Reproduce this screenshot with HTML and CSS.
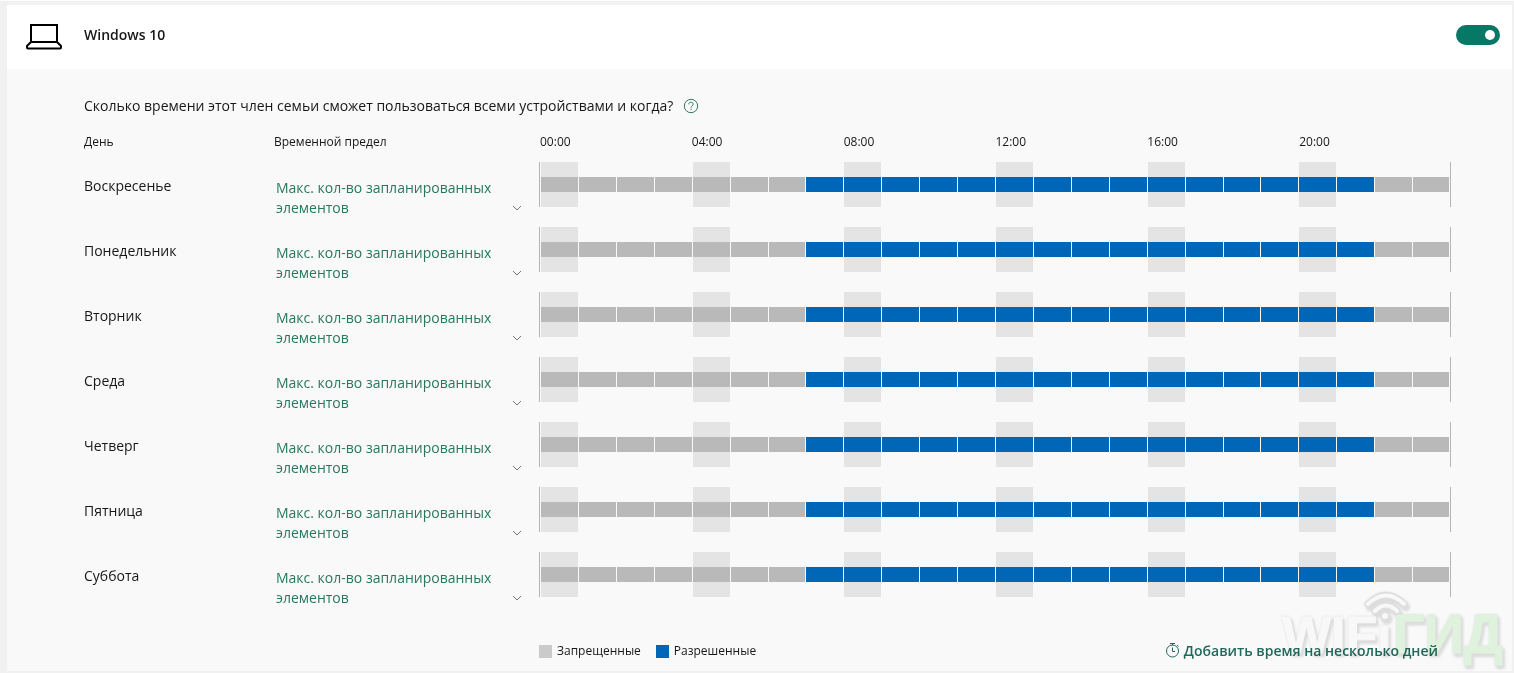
FILE: index.html
```html
<!DOCTYPE html>
<html lang="ru">
<head>
<meta charset="utf-8">
<title>Windows 10</title>
<link rel="stylesheet" href="styles.css">
</head>
<body>
<main class="card">
  <header class="device">
    <svg class="laptop" viewBox="0 0 38 28" aria-hidden="true"><path d="M6 3h26v17H6zM6 20l-4 4v1.500q0 1 1 1h32q1 0 1-1v-1.500L32 20"/></svg>
    <h1 class="device-name" id="device-name">Windows 10</h1>
    <input class="toggle" type="checkbox" role="switch" aria-labelledby="device-name" checked>
  </header>
  <section class="schedule">
    <div class="question">
      <h2 class="question-text">Сколько времени этот член семьи сможет пользоваться всеми устройствами и когда?</h2>
      <button class="help" type="button" aria-label="Справка"><svg class="help-icon" viewBox="0 0 16 16" aria-hidden="true"><circle cx="8" cy="8" r="6.700"/><path d="M5.800 6.300C5.800 3.400 10.200 3.600 10.200 6.200 10.200 7.800 8 7.900 8 9.700M8 10.800v1.200"/></svg></button>
    </div>
    <table class="days">
      <thead>
        <tr>
          <th class="col-day" scope="col">День</th>
          <th class="col-limit" scope="col">Временной предел</th>
          <th scope="col"><div class="hours"><span>00:00</span><span>04:00</span><span>08:00</span><span>12:00</span><span>16:00</span><span>20:00</span></div></th>
        </tr>
      </thead>
      <tbody id="days"></tbody>
    </table>
    <footer class="footer">
      <ul class="legend">
        <li class="legend-item"><span class="swatch"></span>Запрещенные</li>
        <li class="legend-item"><span class="swatch swatch-allowed"></span>Разрешенные</li>
      </ul>
      <button class="add-time" type="button"><svg class="timer" viewBox="0 0 15 16" aria-hidden="true"><circle cx="7.500" cy="8" r="6"/><path d="M5 0.500h5M7.500 0.500v2M12 2l1.500 1.500M7.500 4.500V8.500H10"/></svg>Добавить время на несколько дней</button>
    </footer>
  </section>
</main>
<svg class="watermark" viewBox="0 0 236 86" aria-hidden="true">
  <text x="6" y="66" class="mark-text mark-latin">WIF</text>
  <text x="101" y="66" class="mark-text mark-latin">ı</text>
  <text x="117" y="66" class="mark-text mark-green">ГИД</text>
  <path class="mark-halo" d="M92 17Q110 0 128 17M99 24Q110 13 121 24"/>
  <path class="mark-wave" d="M92 17Q110 0 128 17M99 24Q110 13 121 24"/>
  <circle class="mark-dot" cx="109" cy="29" r="4"/>
</svg>
<script src="schedule.js"></script>
</body>
</html>
```
FILE: styles.css
```css
* { box-sizing: border-box; }
body {
  margin: 0;
  padding: 4px 2px 2px 7px;
  border-top: 1px solid #fcfcfc;
  background: #f1f1f1;
  color: #171717;
  font: 14px/20px "Open Sans", "Noto Sans", sans-serif;
  position: relative;
}
button { font: inherit; color: inherit; background: none; border: 0; padding: 0; cursor: pointer; }
.card { background: #f9f9f9; }
.device {
  display: flex;
  align-items: center;
  height: 64px;
  padding: 0 12px 4px 18px;
  background: #fff;
}
.laptop { width: 38px; height: 28px; margin: 2px 21px 0 0; fill: none; stroke: #000; stroke-width: 2; }
.device-name { flex: 1; margin: 0; font-size: 14px; font-weight: 600; }
.toggle {
  appearance: none;
  display: flex;
  align-items: center;
  justify-content: flex-end;
  width: 44px;
  height: 20px;
  margin: 0;
  padding: 0 5px;
  border-radius: 10px;
  background: #077865;
}
.toggle::before { content: ""; width: 10px; height: 10px; border-radius: 50%; background: #fff; }
.toggle:not(:checked) { justify-content: flex-start; background: #777; }
.schedule { padding: 27px 61px 10px 77px; }
.question { display: flex; align-items: center; gap: 10px; }
.question-text { margin: 0; font-size: 14px; font-weight: 400; }
.help { display: flex; }
.help-icon { width: 16px; height: 16px; fill: none; stroke: #35755f; stroke-width: 1; }
.days { width: 100%; table-layout: fixed; border-collapse: collapse; margin-top: 16px; }
.days th, .days td { padding: 0; text-align: left; vertical-align: top; font-weight: 400; }
.days thead th { height: 30px; font-size: 12px; }
.days tbody tr { height: 65px; }
.col-day { width: 190px; }
.col-limit { width: 265px; }
.hours { display: grid; grid-template-columns: repeat(6, 1fr); padding-left: 1px; }
.days .day { padding-top: 14px; }
.limit {
  display: flex;
  align-items: flex-end;
  justify-content: space-between;
  width: 246px;
  margin: 16px 0 0 2px;
  color: #28775f;
  text-align: left;
}
.limit-text { width: 225px; }
.chevron { width: 10px; height: 20px; fill: none; stroke: #777; stroke-width: 1; }
.timeline {
  display: grid;
  grid-template-columns: repeat(24, 1fr);
  gap: 1px;
  height: 45px;
  padding-left: 1px;
  border: solid #b5b5b5;
  border-width: 0 1px;
}
.hour { padding: 15px 0; background: #b9b9b9 content-box; }
.hour:last-child { margin-right: 1px; }
.hour-marked { background: linear-gradient(#b9b9b9, #b9b9b9) content-box, #e4e4e4; }
.hour-allowed { background: #0067b8 content-box; }
.hour-allowed.hour-marked { background: linear-gradient(#0067b8, #0067b8) content-box, #e4e4e4; }
.footer { display: flex; justify-content: space-between; padding: 24px 13px 0 455px; }
.legend { display: flex; gap: 15px; margin: 0; padding: 0; list-style: none; font-size: 12px; }
.legend-item { display: flex; align-items: center; gap: 5px; }
.swatch { width: 13px; height: 13px; background: #cacaca; }
.swatch-allowed { background: #0067b8; }
.add-time { display: flex; align-items: center; gap: 4px; color: #21695b; font-weight: 600; }
.timer { width: 15px; height: 16px; fill: none; stroke: #21695b; stroke-width: 1; }
.watermark {
  position: absolute;
  right: 2px;
  bottom: 0;
  width: 236px;
  height: 86px;
  pointer-events: none;
  mix-blend-mode: multiply;
  filter: drop-shadow(2px 3px 1px #e2e2e2) drop-shadow(0 0 1px #e6e6e6);
}
.mark-text { font: bold 55px "Liberation Sans", sans-serif; stroke-width: 1; }
.mark-latin { font-size: 52px; fill: #fefefe; stroke: #fefefe; }
.mark-green { fill: #e5f8e4; stroke: #e5f8e4; }
.mark-halo { fill: none; stroke: #e4e4e4; stroke-width: 7; stroke-linecap: round; }
.mark-wave { fill: none; stroke: #fefefe; stroke-width: 4; stroke-linecap: round; }
.mark-dot { fill: #fefefe; stroke: #e4e4e4; stroke-width: 2; }
```
FILE: schedule.js
```js
const days = ["Воскресенье", "Понедельник", "Вторник", "Среда", "Четверг", "Пятница", "Суббота"];
const body = document.getElementById("days");
for (const day of days) {
  let hours = "";
  for (let h = 0; h < 24; h++) {
    const marked = h % 4 === 0 ? " hour-marked" : "";
    const allowed = h >= 7 && h < 22 ? " hour-allowed" : "";
    hours += `<span class="hour${marked}${allowed}"></span>`;
  }
  body.insertAdjacentHTML("beforeend", `<tr>
    <th class="day" scope="row">${day}</th>
    <td><button class="limit" type="button" aria-haspopup="listbox"><span class="limit-text">Макс. кол-во запланированных элементов</span><svg class="chevron" viewBox="0 0 10 20" aria-hidden="true"><path d="M1 8l4 4 4-4"/></svg></button></td>
    <td><div class="timeline" role="img" aria-label="Разрешено с 07:00 до 22:00">${hours}</div></td>
  </tr>`);
}
```
